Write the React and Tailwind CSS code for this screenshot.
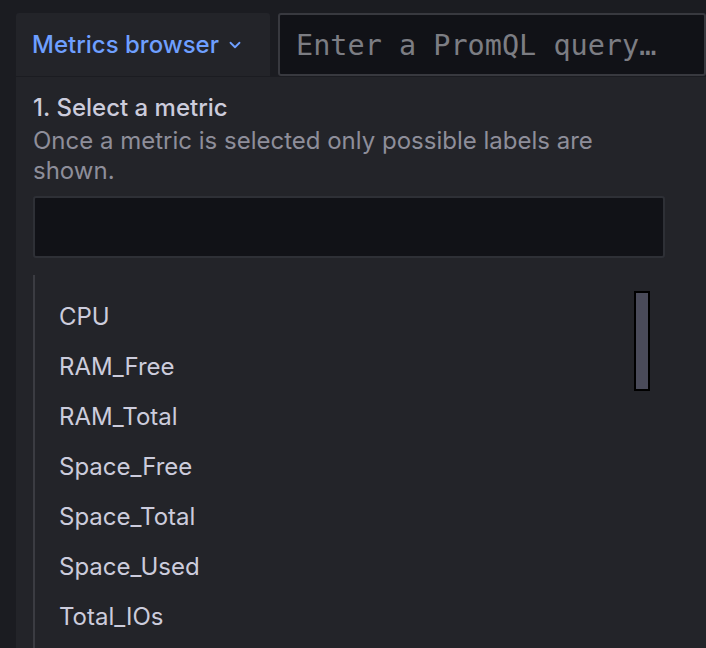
import React, { useState } from 'react';

const metrics = ['CPU', 'RAM_Free', 'RAM_Total', 'Space_Free', 'Space_Total', 'Space_Used', 'Total_IOs'];

function Chevron() {
    return (
        <svg width="18" height="18" viewBox="0 0 24 24" fill="none" stroke="currentColor" strokeWidth="2.4" strokeLinecap="round" strokeLinejoin="round">
            <path d="M6 9l6 6 6-6" />
        </svg>
    );
}

function App() {
    const [search, setSearch] = useState('');

    return (
        <div className="h-[648px] w-[706px] overflow-hidden bg-[#1b1c21] pt-[13px] pl-4 font-['Inter',sans-serif]">
            <div className="flex h-[63px] gap-2">
                <button className="flex w-[254px] items-center gap-[7px] rounded-t-[3px] bg-[#232429] pl-[16px] text-[24px] font-medium text-[#6e9fff]">
                    Metrics browser
                    <Chevron />
                </button>
                <div className="flex flex-1 items-center rounded-[3px] border-2 border-[#38393f] bg-[#111217] pl-4 pt-[3px]">
                    <span className="whitespace-nowrap font-['DejaVu_Sans_Mono',monospace] text-[28.5px] text-[#7c7d83]">
                        Enter a PromQL query…
                    </span>
                </div>
            </div>
            <div className="mt-px h-full bg-[#232429] pl-[17px] pt-[16px]">
                <div className="text-[24px] font-medium leading-[30px] text-[#ccccdc]">1. Select a metric</div>
                <p className="mt-[3px] w-[632px] text-[24px] leading-[30px] text-[#8e8e9a]">
                    Once a metric is selected only possible labels are shown.
                </p>
                <input
                    value={search}
                    onChange={(e) => setSearch(e.target.value)}
                    className="mt-[10px] block h-[62px] w-[632px] rounded-[3px] border-2 border-[#2e3036] bg-[#111217] px-3 text-[24px] text-[#ccccdc] outline-none"
                />
                <div className="relative mt-[17px] h-[400px] w-[632px] border-l-2 border-[#3b3c42] pl-[24px] pt-[27px]">
                    {metrics.map((m) => (
                        <div key={m} className="h-[50px] text-[24px] leading-[30px] text-[#ccccdc]">
                            {m}
                        </div>
                    ))}
                    <div className="absolute right-[15px] top-[16px] h-[100px] w-4 border-2 border-black bg-[#4a4b5a]" />
                </div>
            </div>
        </div>
    );
}

export default App;
